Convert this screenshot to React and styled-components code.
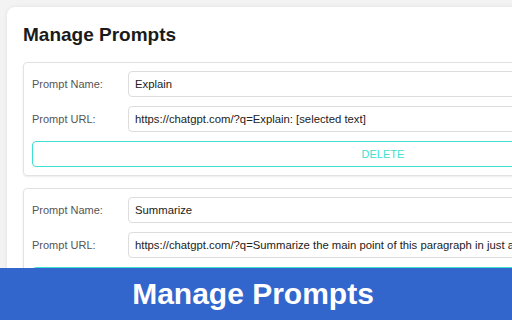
import React from 'react';
import styled, { createGlobalStyle } from 'styled-components';

const GlobalStyle = createGlobalStyle`
  html, body {
    margin: 0;
    padding: 0;
    background: #f3f3f3;
    font-family: "Liberation Sans", Arial, sans-serif;
    overflow: hidden;
  }
`;

const Page = styled.div`
  padding: 7px;
  width: 766px;
  box-sizing: border-box;
`;

const Panel = styled.div`
  background: #fff;
  border-radius: 8px;
  box-shadow: 0 0 4px rgba(0, 0, 0, 0.08);
  padding: 16px;
`;

const Title = styled.h1`
  margin: 1px 0 16px;
  font-size: 19px;
  line-height: 22px;
  font-weight: bold;
  color: #1a1a1a;
`;

const Card = styled.div`
  border: 1px solid #e2e2e2;
  border-radius: 4px;
  box-shadow: 0 1px 2px rgba(0, 0, 0, 0.08);
  padding: 8px;
  margin-bottom: 12px;
  display: flex;
  flex-direction: column;
  gap: 9px;
`;

const Row = styled.div`
  display: flex;
  align-items: center;
`;

const Label = styled.label`
  width: 96px;
  flex: none;
  font-size: 11px;
  color: #555;
`;

const Input = styled.input`
  flex: 1;
  height: 26px;
  box-sizing: border-box;
  border: 1px solid #ddd;
  border-radius: 4px;
  padding: 0 6px;
  font-family: "Liberation Sans", Arial, sans-serif;
  font-size: 11.3px;
  color: #222;
  outline: none;
`;

const DeleteButton = styled.button`
  height: 26px;
  border: 1px solid #40e0d0;
  border-radius: 4px;
  background: #fff;
  color: #40e0d0;
  font-family: "Liberation Sans", Arial, sans-serif;
  font-size: 11px;
  text-transform: uppercase;
  cursor: pointer;
`;

const Banner = styled.div`
  position: fixed;
  left: 0;
  right: 0;
  bottom: 0;
  height: 52px;
  background: #3366cc;
  color: #fff;
  display: flex;
  align-items: center;
  justify-content: center;
  font-size: 30px;
  font-weight: bold;
  padding-right: 6px;
`;

const prompts = [
  { name: 'Explain', url: 'https://chatgpt.com/?q=Explain: [selected text]' },
  {
    name: 'Summarize',
    url: 'https://chatgpt.com/?q=Summarize the main point of this paragraph in just a few sentences: [selected text]',
  },
];

const App = () => {
  return (
    <>
      <GlobalStyle />
      <Page>
        <Panel>
          <Title>Manage Prompts</Title>
          {prompts.map((p, index) => (
            <Card key={index}>
              <Row>
                <Label>Prompt Name:</Label>
                <Input defaultValue={p.name} />
              </Row>
              <Row>
                <Label>Prompt URL:</Label>
                <Input defaultValue={p.url} />
              </Row>
              <DeleteButton>Delete</DeleteButton>
            </Card>
          ))}
        </Panel>
      </Page>
      <Banner>Manage Prompts</Banner>
    </>
  );
};

export default App;
